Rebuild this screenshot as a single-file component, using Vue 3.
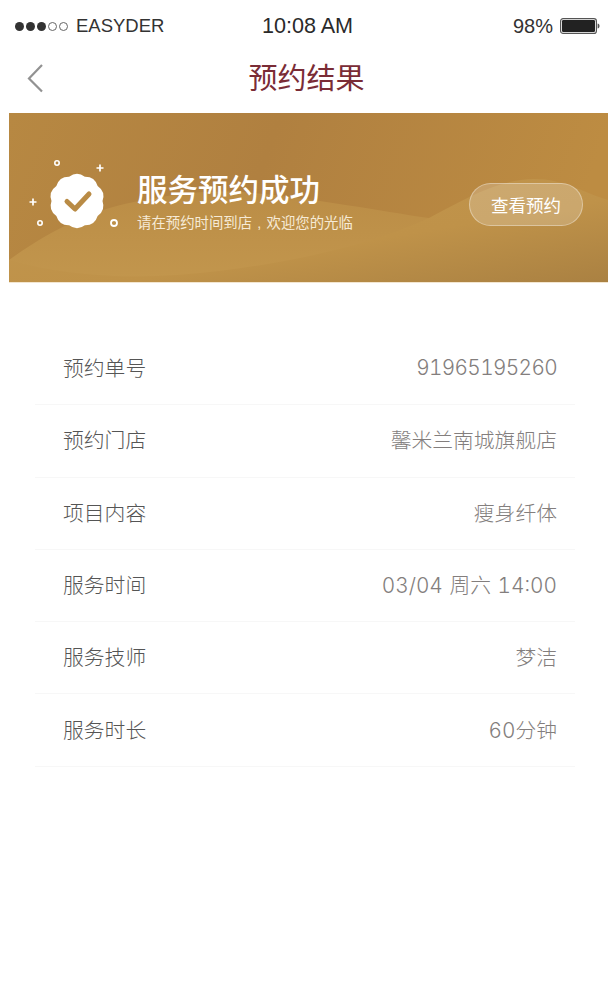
<template>
  <main class="page">
    <header class="status-bar">
      <div class="status-left">
        <span class="signal">
          <i v-for="n in 5" :key="n" class="dot" :class="{ off: n > 3 }"></i>
        </span>
        <span>EASYDER</span>
      </div>
      <div class="status-time">10:08 AM</div>
      <div class="status-right">
        <span>98%</span>
        <svg class="battery" width="40" height="16" viewBox="0 0 40 16">
          <rect x="0.6" y="0.6" width="35.8" height="14.8" rx="2.5" fill="none" stroke="#555" stroke-width="1.2" />
          <rect x="2" y="2" width="33" height="12" rx="1.2" fill="#222" />
          <path d="M37.6 5.5c1.2.2 1.9 1.2 1.9 2.5s-.7 2.3-1.9 2.5z" fill="#555" />
        </svg>
      </div>
    </header>

    <nav class="nav-bar">
      <svg class="back" width="18" height="30" viewBox="0 0 18 30">
        <path d="M16 2 3 15.5 16 28.5" fill="none" stroke="#929292" stroke-width="2.2" />
      </svg>
      <h1 class="nav-title">预约结果</h1>
    </nav>

    <section class="banner">
      <svg class="waves" viewBox="0 0 599 169" preserveAspectRatio="none">
        <defs>
          <linearGradient id="bg" x1="0" y1="0" x2="1" y2="0.1">
            <stop offset="0" stop-color="#b78842" />
            <stop offset="0.45" stop-color="#b08040" />
            <stop offset="1" stop-color="#bd8c42" />
          </linearGradient>
          <linearGradient id="hill" x1="0" y1="0" x2="0" y2="1">
            <stop offset="0" stop-color="#bb8d46" />
            <stop offset="1" stop-color="#c2964d" />
          </linearGradient>
          <linearGradient id="front" x1="0" y1="0" x2="1" y2="1">
            <stop offset="0" stop-color="#c2964e" />
            <stop offset="0.6" stop-color="#bf9249" />
            <stop offset="1" stop-color="#aa8142" />
          </linearGradient>
        </defs>
        <rect width="599" height="169" fill="url(#bg)" />
        <path d="M0 147C40 118 85 96 125 89 165 81 200 76 245 80 310 86 370 98 420 105L420 169 0 169Z" fill="url(#hill)" />
        <path d="M0 147C60 164 130 168 210 158 290 148 360 132 420 105 455 86 490 66 525 66 555 66 575 80 599 87L599 169 0 169Z" fill="url(#front)" />
      </svg>

      <svg class="badge" width="100" height="90" viewBox="0 0 100 90">
        <path :d="badgePath" fill="#fff" />
        <path d="M38 47.500 46 55 60 40" fill="none" stroke="#b98b45" stroke-width="5" stroke-linecap="round" stroke-linejoin="round" />
        <circle cx="28" cy="9" r="2.200" fill="none" stroke="#fff" stroke-width="1.600" />
        <circle cx="11" cy="69" r="2.200" fill="none" stroke="#fff" stroke-width="1.600" />
        <circle cx="85" cy="69" r="3" fill="none" stroke="#fff" stroke-width="1.800" />
        <path d="M71 10.500v7M67.500 14h7M4 44.500v7M.5 48h7" stroke="#fff" stroke-width="1.700" />
      </svg>

      <div class="banner-text">
        <h2 class="banner-title">服务预约成功</h2>
        <p class="banner-sub">请在预约时间到店<span class="comma">,</span>欢迎您的光临</p>
      </div>

      <button class="check-btn" type="button">查看预约</button>
    </section>

    <ul class="info-list">
      <li v-for="item in rows" :key="item.label" class="info-row">
        <span class="info-label">{{ item.label }}</span>
        <span class="info-value" :class="{ tight: item.tight }">{{ item.value }}</span>
      </li>
    </ul>
  </main>
</template>

<script setup>
const rows = [
  { label: '预约单号', value: '91965195260', tight: true },
  { label: '预约门店', value: '馨米兰南城旗舰店' },
  { label: '项目内容', value: '瘦身纤体' },
  { label: '服务时间', value: '03/04 周六 14:00' },
  { label: '服务技师', value: '梦洁' },
  { label: '服务时长', value: '60分钟' }
]

// scalloped seal with ten lobes
function sealPath(cx, cy, outer, inner, lobes) {
  const step = (Math.PI * 2) / lobes
  let d = ''
  for (let i = 0; i < lobes; i++) {
    const a = -Math.PI / 2 + i * step
    const mid = a + step / 2
    const start = [cx + inner * Math.cos(a - step / 2), cy + inner * Math.sin(a - step / 2)]
    if (i === 0) d += `M${start[0].toFixed(2)} ${start[1].toFixed(2)}`
    d += `Q${(cx + outer * 1.08 * Math.cos(a)).toFixed(2)} ${(cy + outer * 1.08 * Math.sin(a)).toFixed(2)} `
    d += `${(cx + inner * Math.cos(mid)).toFixed(2)} ${(cy + inner * Math.sin(mid)).toFixed(2)}`
  }
  return d + 'Z'
}

const badgePath = sealPath(48, 47, 28, 25.5, 10)
</script>

<style>
html, body { background: #fff; }
</style>

<style scoped>
.page {
  width: 613px;
  height: 996px;
  overflow: hidden;
  background: #fff;
  font-family: "Noto Sans CJK SC", "Liberation Sans", sans-serif;
}
.status-bar {
  display: flex;
  align-items: center;
  height: 52px;
  padding: 0 13px 0 15px;
  font-family: "Liberation Sans", sans-serif;
  font-size: 20px;
  color: #333;
}
.status-left, .status-right { flex: 1; display: flex; align-items: center; }
.status-left { gap: 8px; font-size: 18.500px; }
.status-right { justify-content: flex-end; gap: 7px; }
.status-time { color: #2a2a2a; font-size: 21.600px; }
.signal { display: flex; gap: 2px; }
.dot { width: 9px; height: 9px; border-radius: 50%; background: #333; box-sizing: border-box; }
.dot.off { background: none; border: 1px solid #666; }
.nav-bar {
  position: relative;
  display: flex;
  justify-content: center;
  align-items: center;
  height: 52px;
}
.back { position: absolute; left: 26px; top: 11px; }
.nav-title { margin: -4px 0 0; font-size: 29px; font-weight: 400; line-height: 52px; color: #7a2c36; }
.banner {
  position: relative;
  display: flex;
  align-items: center;
  height: 169px;
  margin: 9px 5px 0 9px;
  padding-right: 25px;
  border-bottom: 1px solid #f3e6d0;
  overflow: hidden;
}
.waves { position: absolute; left: 0; top: 0; width: 100%; height: 100%; }
.badge { position: relative; flex: none; margin-left: 20px; margin-top: 3px; }
.banner-text { position: relative; flex: 1; margin: 6px 0 0 8px; color: #fff; }
.banner-title { margin: 0; font-size: 30.500px; font-weight: 500; line-height: 40px; }
.banner-sub { margin: 4px 0 0; font-size: 14.400px; line-height: 20px; color: #f6ead6; }
.comma { display: inline-block; width: 1em; text-align: center; font-family: "Liberation Sans", sans-serif; }
.check-btn {
  position: relative;
  flex: none;
  width: 114px;
  height: 43px;
  margin-top: 14px;
  padding: 0;
  border: 1px solid rgba(255, 255, 255, 0.35);
  border-radius: 22px;
  background: rgba(255, 255, 255, 0.2);
  color: #fff;
  font-family: inherit;
  font-size: 17.500px;
}
.info-list {
  margin: 50px 38px 0 35px;
  padding: 0;
  list-style: none;
}
.info-row {
  display: flex;
  justify-content: space-between;
  align-items: center;
  box-sizing: border-box;
  height: 72.300px;
  padding: 0 18px 3px 28px;
  border-bottom: 1px solid #f7f7f7;
  font-size: 20.800px;
  font-weight: 300;
}
.info-label { color: #555; }
.info-value {
  color: #837e7d;
  font-family: Inter, "Noto Sans CJK SC", sans-serif;
  font-variant-numeric: tabular-nums;
  word-spacing: 1px;
}
.info-value.tight { letter-spacing: -0.65px; }
</style>
